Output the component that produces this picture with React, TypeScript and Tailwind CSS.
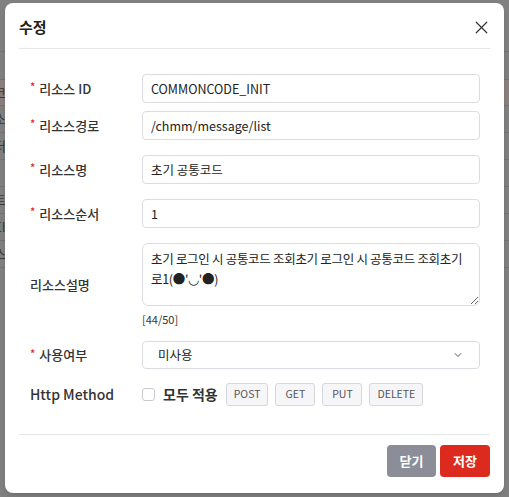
import React, { useState } from 'react';
import { X, ChevronDown } from 'lucide-react';

const FONT = { fontFamily: '"Noto Sans CJK KR", "Noto Sans", sans-serif' };

const bgRows = [
  { h: 'h-[28px]', tint: false, ch: '' },
  { h: 'h-[26px]', tint: true, ch: '코' },
  { h: 'h-[27px]', tint: false, ch: '소' },
  { h: 'h-[27px]', tint: false, ch: '더' },
  { h: 'h-[27px]', tint: false, ch: '-' },
  { h: 'h-[27px]', tint: false, ch: '트' },
  { h: 'h-[27px]', tint: false, ch: 'EI' },
  { h: 'h-[27px]', tint: false, ch: '스' },
];

function Label({ text, required }: { text: string; required?: boolean }) {
  return (
    <div className="w-[112px] shrink-0 flex items-center text-[13px] font-medium text-[#333]">
      {required && <span className="text-[#e02424] text-[11px] mr-[4px] -mt-[4px]">*</span>}
      <span>{text}</span>
    </div>
  );
}

function TextField({ value }: { value: string }) {
  return (
    <input
      defaultValue={value}
      className="flex-1 h-[29px] rounded-[4px] border border-[#dcdde2] px-[8px] text-[12.5px] text-[#222] outline-none"
      style={FONT}
    />
  );
}

export default function App() {
  const [desc, setDesc] = useState("초기 로그인 시 공통코드 조회초기 로그인 시 공통코드 조회초기 로1(●'◡'●)");

  return (
    <div className="relative w-[509px] h-[497px] overflow-hidden bg-[#808080]" style={FONT}>
      {/* page behind the dimmed overlay */}
      <div className="h-[52px] border-b border-[#747474]" />
      {bgRows.map((r, i) => (
        <div
          key={i}
          className={`${r.h} border-b border-[#747474] flex items-center text-[13px] text-[#3a3a3a] ${r.tint ? 'bg-[#8c7f7f]' : ''}`}
        >
          <span className="-ml-[6px]">{r.ch}</span>
        </div>
      ))}

      {/* modal */}
      <div className="absolute left-[5px] top-[3px] w-[499px] h-[490px] rounded-[8px] bg-white px-[14px] flex flex-col shadow-md">
        <div className="h-[46px] pt-[4px] flex items-center justify-between border-b border-[#e6e7ea]">
          <span className="text-[15px] font-bold text-[#222]">수정</span>
          <X className="w-[21px] h-[21px] text-[#333] -mr-[2px]" strokeWidth={1.4} />
        </div>

        <div className="pl-[11px] pr-[10px] pt-[25px]">
          <div className="flex items-center">
            <Label text="리소스 ID" required />
            <TextField value="COMMONCODE_INIT" />
          </div>
          <div className="flex items-center mt-[8px]">
            <Label text="리소스경로" required />
            <TextField value="/chmm/message/list" />
          </div>
          <div className="flex items-center mt-[15px]">
            <Label text="리소스명" required />
            <TextField value="초기 공통코드" />
          </div>
          <div className="flex items-center mt-[15px]">
            <Label text="리소스순서" required />
            <TextField value="1" />
          </div>
          <div className="flex items-center mt-[15px]">
            <Label text="리소스설명" />
            <div className="flex-1 flex flex-col">
              <textarea
                value={desc}
                onChange={(e) => setDesc(e.target.value)}
                className="h-[63px] rounded-[6px] border border-[#dcdde2] px-[8px] py-[5px] text-[12.5px] tracking-[-0.3px] leading-[20px] text-[#222] outline-none"
                style={FONT}
              />
              <span className="mt-[5px] text-[11px] leading-[16px] text-[#333]">[{desc.length}/50]</span>
            </div>
          </div>
          <div className="flex items-center mt-[14px]">
            <Label text="사용여부" required />
            <div className="flex-1 h-[28px] rounded-[4px] border border-[#dcdde2] pl-[15px] pr-[15px] flex items-center justify-between text-[12.5px] text-[#222]">
              <span>미사용</span>
              <ChevronDown className="w-[12px] h-[12px] text-[#444]" strokeWidth={1.8} />
            </div>
          </div>
          <div className="flex items-center mt-[14px]">
            <div className="w-[112px] shrink-0 text-[14px] font-medium text-[#333]">Http Method</div>
            <label className="flex items-center">
              <span className="w-[13px] h-[13px] rounded-[3px] border border-[#c9cbd1] bg-white" />
              <span className="ml-[8px] text-[14px] font-bold text-[#333]">모두 적용</span>
            </label>
            <div className="flex items-center gap-[7px] ml-[8px]">
              {['POST', 'GET', 'PUT', 'DELETE'].map((m) => (
                <button
                  key={m}
                  className="h-[23px] min-w-[40px] px-[7px] rounded-[3px] border border-[#d6d7dc] bg-[#f6f6f8] text-[10.5px] text-[#555] leading-none"
                  style={FONT}
                >
                  {m}
                </button>
              ))}
            </div>
          </div>
        </div>

        <div className="mt-[28px] border-t border-[#e6e7ea] pt-[10px] flex justify-end gap-[4px]">
          <button className="w-[49px] h-[32px] rounded-[4px] bg-[#8b8e99] text-white text-[13px] font-bold" style={FONT}>
            닫기
          </button>
          <button className="w-[50px] h-[32px] rounded-[4px] bg-[#dc2a1e] text-white text-[13px] font-bold" style={FONT}>
            저장
          </button>
        </div>
      </div>
    </div>
  );
}
